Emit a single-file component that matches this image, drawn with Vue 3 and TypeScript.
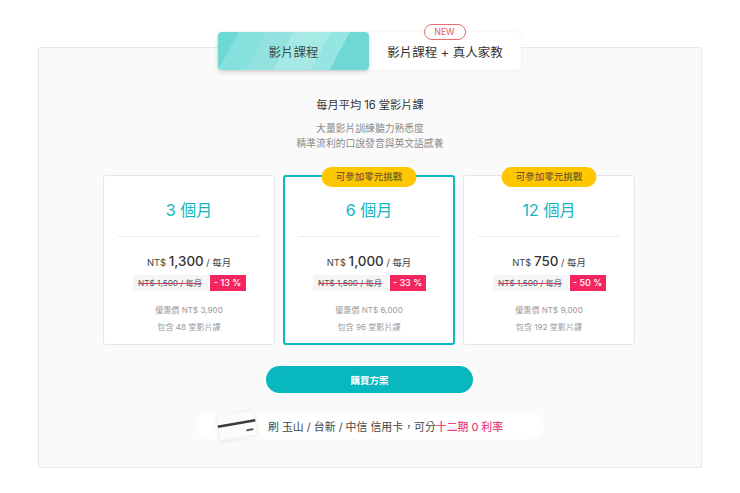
<script setup lang="ts">
interface Plan {
  months: string
  price: string
  off: string
  total: string
  lessons: string
  badge: boolean
  active: boolean
}
const plans: Plan[] = [
  { months: '3 個月', price: '1,300', off: '- 13 %', total: '3,900', lessons: '48', badge: false, active: false },
  { months: '6 個月', price: '1,000', off: '- 33 %', total: '6,000', lessons: '96', badge: true, active: true },
  { months: '12 個月', price: '750', off: '- 50 %', total: '9,000', lessons: '192', badge: true, active: false },
]
</script>

<template>
  <div class="page">
    <section class="panel">
      <div class="tabs">
        <div class="tab tab-on">影片課程</div>
        <div class="tab tab-off">
          <span class="new">NEW</span>
          影片課程 + 真人家教
        </div>
      </div>
      <h2 class="title">每月平均 16 堂影片課</h2>
      <p class="desc">大量影片訓練聽力熟悉度<br />精準流利的口說發音與英文語感養</p>
      <div class="cards">
        <article v-for="p in plans" :key="p.months" class="card" :class="{ active: p.active }">
          <span v-if="p.badge" class="badge">可參加零元挑戰</span>
          <h3 class="months">{{ p.months }}</h3>
          <div class="rule"></div>
          <div class="price"><span class="cur">NT$</span> <b>{{ p.price }}</b> <span class="per">/ 每月</span></div>
          <div class="discount">
            <s class="old">NT$ 1,500 / 每月</s>
            <span class="off">{{ p.off }}</span>
          </div>
          <div class="meta">優惠價 NT$ {{ p.total }}</div>
          <div class="meta second">包含 {{ p.lessons }} 堂影片課</div>
        </article>
      </div>
      <button class="buy" type="button">購買方案</button>
      <div class="promo">
        <svg class="credit" width="44" height="34" viewBox="0 0 44 34" aria-hidden="true">
          <g transform="rotate(-10 22 17)">
            <rect x="3" y="4" width="38" height="25" rx="1.5" fill="#fbfbfb" stroke="#f0f0f0" stroke-width="0.6" />
            <rect x="3" y="13.2" width="38" height="2.6" fill="#3a3a3c" />
            <rect x="30.5" y="22" width="7" height="1.8" fill="#48484a" />
          </g>
        </svg>
        <span>刷 玉山 / 台新 / 中信 信用卡，可分<em>十二期 0 利率</em></span>
      </div>
    </section>
  </div>
</template>

<style>
html, body { margin: 0; background: #fff; }
</style>

<style scoped>
.page {
  width: 740px;
  height: 493px;
  padding: 47px 38px 0;
  box-sizing: border-box;
  font-family: Inter, "Noto Sans CJK TC", sans-serif;
  color: #333;
}
.panel {
  width: 664px;
  height: 421px;
  box-sizing: border-box;
  background: #fafafa;
  border: 1px solid #e9e9e9;
  border-radius: 2px;
  display: flex;
  flex-direction: column;
  align-items: center;
}
.tabs {
  display: flex;
  margin: -16px 2px 0 0;
  width: 303px;
  height: 38px;
  flex: none;
  background: #fff;
  border-radius: 6px;
  box-shadow: 0 0 3px rgba(0, 0, 0, 0.08);
}
.tab {
  display: flex;
  align-items: center;
  justify-content: center;
  padding-left: 1px;
  font-size: 12.5px;
  position: relative;
}
.tab-on {
  box-sizing: border-box;
  width: 151px;
  border-radius: 4px;
  background: linear-gradient(118deg, #6ed8d5 0 12%, #86e0dd 12% 28%, #92e3e0 28% 44%, #a6eae6 44% 66%, #95e5e2 66% 77%, #6fd8d5 77% 100%);
  box-shadow: 0 2px 4px rgba(0, 0, 0, 0.16);
  color: #3c4a4a;
}
.tab-off {
  flex: 1;
}
.new {
  position: absolute;
  top: -8px;
  left: 55px;
  width: 42px;
  height: 16px;
  box-sizing: border-box;
  border: 1px solid #e86a72;
  border-radius: 8px;
  background: #fff;
  color: #e0555f;
  font-size: 8.5px;
  line-height: 14px;
  text-align: center;
}
.title {
  margin: 27px 0 0;
  font-size: 11.2px;
  font-weight: 400;
  line-height: 16px;
  color: #333;
}
.desc {
  margin: 8px 0 0;
  font-size: 9.8px;
  line-height: 15px;
  text-align: center;
  color: #8a8a8a;
}
.cards {
  display: flex;
  gap: 8px;
  margin: 24px 2px 0 0;
}
.card {
  position: relative;
  width: 172px;
  height: 170px;
  box-sizing: border-box;
  background: #fff;
  border: 1px solid #e6e6e6;
  border-radius: 3px;
  display: flex;
  flex-direction: column;
  align-items: center;
}
.card.active {
  border: 2px solid #0cb8c0;
}
.badge {
  position: absolute;
  top: -9px;
  left: 50%;
  transform: translateX(-50%);
  width: 95px;
  height: 20px;
  border-radius: 10px;
  background: #ffc700;
  color: #54483a;
  font-size: 9.5px;
  line-height: 20px;
  text-align: center;
}
.active .badge { top: -10px; }
.months {
  margin: 23px 0 0;
  font-size: 16px;
  font-weight: 400;
  line-height: 22px;
  color: #12b5bf;
}
.active .months { margin-top: 22px; }
.rule {
  width: 142px;
  height: 1px;
  background: #ececec;
  margin-top: 15px;
  flex: none;
}
.price {
  margin-top: 14px;
  font-size: 9.4px;
  line-height: 20px;
  color: #444;
  white-space: nowrap;
}
.price b {
  font-size: 13.4px;
  font-weight: 500;
  color: #333;
}
.discount {
  display: flex;
  gap: 2px;
  margin-top: 2px;
  height: 16px;
  align-items: stretch;
  font-size: 8.2px;
}
.old {
  box-sizing: border-box;
  width: 75px;
  background: #f5f5f5;
  color: #555;
  text-decoration-color: #c33f6a;
  line-height: 16px;
  white-space: nowrap;
  text-align: center;
}
.off {
  width: 36px;
  background: #f5265f;
  color: #fff;
  text-align: center;
  line-height: 16px;
  font-size: 9px;
  font-weight: 500;
}
.meta {
  margin-top: 13px;
  font-size: 8.1px;
  line-height: 12px;
  color: #9a9a9a;
}
.meta.second { margin-top: 5px; }
.buy {
  margin: 21px 1px 0 0;
  width: 207px;
  height: 27px;
  flex: none;
  border: 0;
  padding: 0;
  border-radius: 14px;
  background: #09b7bf;
  color: #fff;
  font-family: inherit;
  font-size: 9.5px;
  font-weight: 700;
}
.promo {
  margin-top: 20px;
  width: 348px;
  height: 26px;
  border-radius: 13px;
  background: #fff;
  display: flex;
  align-items: center;
  font-size: 10.9px;
  color: #444;
  white-space: nowrap;
}
.credit {
  margin-left: 19px;
  margin-right: 9px;
  flex: none;
  filter: drop-shadow(0 1px 2px rgba(0, 0, 0, 0.08));
}
.promo em {
  font-style: normal;
  color: #e8447c;
  font-weight: 500;
}
</style>
